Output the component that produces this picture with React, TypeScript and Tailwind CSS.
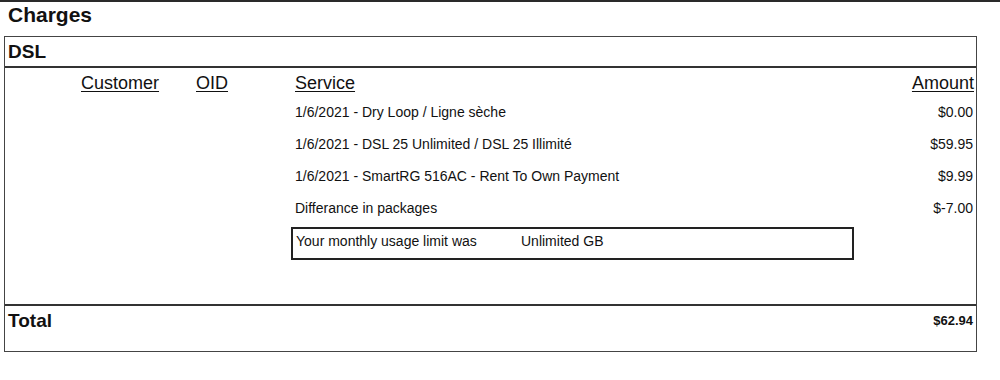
import React from "react";

type Line = { service: string; amount: string };

const lines: Line[] = [
  { service: "1/6/2021 - Dry Loop / Ligne sèche", amount: "$0.00" },
  { service: "1/6/2021 - DSL 25 Unlimited / DSL 25 Illimité", amount: "$59.95" },
  { service: "1/6/2021 - SmartRG 516AC - Rent To Own Payment", amount: "$9.99" },
  { service: "Differance in packages", amount: "$-7.00" },
];

export default function App() {
  return (
    <div
      className="w-[1000px] h-[380px] bg-white text-[#111] border-t-2 border-[#2a2a2a] overflow-hidden"
      style={{ fontFamily: '"Liberation Sans", Arial, sans-serif' }}
    >
      <h1 className="pl-[8px] pt-[1px] text-[21px] leading-[24px] font-bold">Charges</h1>

      <div className="ml-[4px] mt-[9px] w-[973px] h-[316px] border border-[#444] flex flex-col">
        {/* section header */}
        <div className="h-[31px] border-b-2 border-[#333] pl-[3px] flex items-center">
          <span className="text-[19px] font-bold leading-none">DSL</span>
        </div>

        {/* column headings */}
        <div className="h-[25px] flex items-end text-[18px] leading-[20px]">
          <span className="w-[191px] pl-[76px] underline underline-offset-2">Customer</span>
          <span className="w-[99px] underline underline-offset-2">OID</span>
          <span className="flex-1 underline underline-offset-2">Service</span>
          <span className="pr-[2px] underline underline-offset-2">Amount</span>
        </div>

        {/* charge lines */}
        <div className="flex flex-col pt-[3px] text-[14px]">
          {lines.map((l) => (
            <div key={l.service} className="h-[32px] flex items-center">
              <span className="w-[290px]" />
              <span className="flex-1">{l.service}</span>
              <span className="pr-[3px]">{l.amount}</span>
            </div>
          ))}
          <div className="ml-[286px] mt-[3px] w-[563px] h-[33px] border-2 border-[#222] flex items-start pt-[2px] pl-[3px]">
            <span className="w-[225px]">Your monthly usage limit was</span>
            <span>Unlimited GB</span>
          </div>
        </div>

        <div className="flex-1" />

        {/* total */}
        <div className="h-[47px] border-t-2 border-[#333] flex items-start justify-between pl-[3px] pr-[3px] pt-[5px]">
          <span className="text-[19px] font-bold leading-[20px]">Total</span>
          <span className="text-[13px] font-bold leading-[20px]">$62.94</span>
        </div>
      </div>
    </div>
  );
}
